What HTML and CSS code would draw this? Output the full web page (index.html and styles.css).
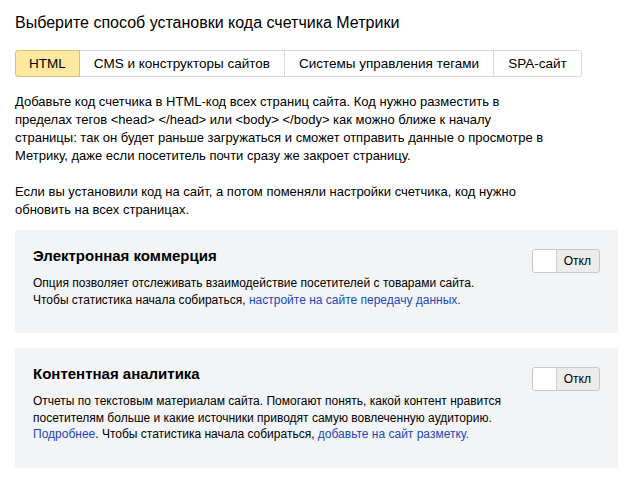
FILE: index.html
```html
<!DOCTYPE html>
<html lang="ru">
<head>
<meta charset="utf-8">
<link rel="stylesheet" href="styles.css">
</head>
<body>
<div class="page">
  <h1 class="title">Выберите способ установки кода счетчика Метрики</h1>
  <div class="tabs">
    <div class="tab tab-active">HTML</div>
    <div class="tab">CMS и конструкторы сайтов</div>
    <div class="tab">Системы управления тегами</div>
    <div class="tab">SPA-сайт</div>
  </div>
  <p class="text">Добавьте код счетчика в HTML-код всех страниц сайта. Код нужно разместить в<br>пределах тегов &lt;head&gt; &lt;/head&gt; или &lt;body&gt; &lt;/body&gt; как можно ближе к началу<br>страницы: так он будет раньше загружаться и сможет отправить данные о просмотре в<br>Метрику, даже если посетитель почти сразу же закроет страницу.</p>
  <p class="text">Если вы установили код на сайт, а потом поменяли настройки счетчика, код нужно<br>обновить на всех страницах.</p>
  <div class="card card-first">
    <div class="card-body">
      <div class="card-title">Электронная коммерция</div>
      <div class="card-desc">Опция позволяет отслеживать взаимодействие посетителей с товарами сайта.<br>Чтобы статистика начала собираться, <a class="link">настройте на сайте передачу данных.</a></div>
    </div>
    <div class="toggle"><span class="knob"></span><span class="toggle-label">Откл</span></div>
  </div>
  <div class="card card-second">
    <div class="card-body">
      <div class="card-title">Контентная аналитика</div>
      <div class="card-desc">Отчеты по текстовым материалам сайта. Помогают понять, какой контент нравится<br>посетителям больше и какие источники приводят самую вовлеченную аудиторию.<br><a class="link">Подробнее</a>. Чтобы статистика начала собираться, <a class="link">добавьте на сайт разметку.</a></div>
    </div>
    <div class="toggle"><span class="knob"></span><span class="toggle-label">Откл</span></div>
  </div>
</div>
</body>
</html>
```
FILE: styles.css
```css
* { box-sizing: border-box; }
html, body { margin: 0; padding: 0; background: #fff; }
body {
  font-family: "Liberation Sans", Arial, sans-serif;
  color: #000;
  -webkit-font-smoothing: antialiased;
}
.page {
  padding: 13px 24px 0 15px;
}
.title {
  margin: 0;
  font-size: 16px;
  font-weight: normal;
  line-height: 20px;
}
.tabs {
  display: flex;
  margin-top: 17px;
  width: max-content;
  border: 1px solid #d9d9d9;
  border-radius: 3px;
}
.tab {
  height: 25px;
  padding: 0 14px;
  font-size: 13.5px;
  line-height: 25px;
  border-left: 1px solid #d9d9d9;
}
.tab:first-child { border-left: none; }
.tab-active {
  padding: 0 13px;
  background: #fde9a0;
  box-shadow: 0 0 0 1px #d8c07a;
  border-radius: 3px 0 0 3px;
  position: relative;
}
.text {
  margin: 16px 0 0;
  font-size: 13px;
  line-height: 18px;
}
.text + .text { margin-top: 18px; }
.card {
  display: flex;
  justify-content: space-between;
  align-items: flex-start;
  background: #f3f4f6;
  padding: 16px 18px 0 18px;
}
.card-first { margin-top: 11px; height: 103px; }
.card-second { margin-top: 15px; height: 120px; }
.card-title {
  font-size: 15px;
  font-weight: bold;
  line-height: 20px;
}
.card-desc {
  margin-top: 9px;
  font-size: 12px;
  line-height: 16.5px;
}
.link { color: #1a49b8; text-decoration: none; }
.toggle {
  display: flex;
  margin-top: 3px;
  height: 24px;
  border: 1px solid #c7c7c7;
  border-radius: 3px;
  background: #ececec;
  overflow: hidden;
}
.knob {
  width: 24px;
  background: #fff;
  border-right: 1px solid #d0d0d0;
}
.toggle-label {
  padding: 0 8px 0 7px;
  font-size: 12px;
  line-height: 22px;
}
```
